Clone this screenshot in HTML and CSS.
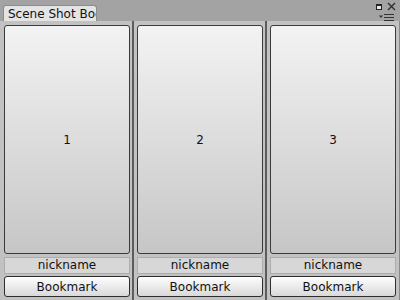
FILE: index.html
```html
<!DOCTYPE html>
<html lang="en">

<head>
    <meta charset="UTF-8">
    <title>Scene Shot Bookmark</title>
    <link rel="stylesheet" href="styles.css">
</head>

<body>

    <!-- Barra da aba -->
    <div class="tabbar">
        <div class="tab">Scene Shot Bookmark</div>
        <div class="win-buttons">
            <div class="win-top">
                <span class="maximize"></span>
                <svg class="close" width="9" height="9" viewBox="0 0 9 9">
                    <path d="M1 1 L8 8 M8 1 L1 8" stroke="#2a2a2a" stroke-width="1.3" fill="none"/>
                </svg>
            </div>
            <svg class="menu" width="16" height="7" viewBox="0 0 16 7">
                <path d="M0 1.5 L4 1.5 L2 4 Z" fill="#333"/>
                <rect x="5" y="0" width="10" height="1" fill="#333"/>
                <rect x="5" y="3" width="10" height="1" fill="#333"/>
                <rect x="5" y="6" width="10" height="1" fill="#333"/>
            </svg>
        </div>
    </div>

    <!-- Colunas de bookmarks -->
    <div class="content">
        <div class="slot">
            <div class="shot">1</div>
            <div class="nickname">nickname</div>
            <button class="bookmark">Bookmark</button>
        </div>
        <div class="divider"></div>
        <div class="slot">
            <div class="shot">2</div>
            <div class="nickname">nickname</div>
            <button class="bookmark">Bookmark</button>
        </div>
        <div class="divider"></div>
        <div class="slot last">
            <div class="shot">3</div>
            <div class="nickname">nickname</div>
            <button class="bookmark">Bookmark</button>
        </div>
    </div>

</body>

</html>
```

FILE: styles.css
```css
body {
    margin: 0;
    width: 400px;
    height: 300px;
    overflow: hidden;
    font-family: "DejaVu Sans", sans-serif;
    font-size: 12px;
    color: #111;
    background: #c2c2c2;
}

.tabbar {
    height: 21px;
    background: #a3a3a3;
    display: flex;
    align-items: flex-end;
    justify-content: space-between;
    padding-left: 3px;
    box-sizing: border-box;
}

.tab {
    width: 94px;
    height: 16px;
    box-sizing: border-box;
    background: #e4e4e4;
    border: 1px solid #8c8c8c;
    border-bottom: none;
    border-radius: 3px 3px 0 0;
    padding: 1px 0 0 4px;
    white-space: nowrap;
    overflow: hidden;
    line-height: 15px;
    color: #111;
}

.win-buttons {
    align-self: stretch;
    display: flex;
    flex-direction: column;
    align-items: flex-end;
    padding: 2px 4px 0 0;
}

.win-top {
    display: flex;
    align-items: center;
    gap: 5px;
}

.maximize {
    width: 4px;
    height: 3px;
    border: 1px solid #222;
    border-top-width: 2px;
    background: #e8e8e8;
}

.menu {
    margin-top: 3px;
    margin-right: 1px;
}

.content {
    display: flex;
    height: 279px;
    border-right: 1px solid #8a8a8a;
}

.slot {
    width: 126px;
    padding: 4px 2px 0 3px;
    display: flex;
    flex-direction: column;
}

.slot:first-child {
    padding-left: 4px;
}

.slot.last {
    padding-right: 3px;
}

.divider {
    width: 2px;
    background: #5c5c5c;
}

.shot {
    height: 229px;
    box-sizing: border-box;
    border: 1px solid #3a3a3a;
    border-radius: 3px;
    background: linear-gradient(to bottom, #f3f3f3, #c6c6c6);
    display: flex;
    align-items: center;
    justify-content: center;
}

.nickname {
    margin-top: 3px;
    height: 17px;
    box-sizing: border-box;
    background: #d7d7d7;
    border: 1px solid #adadad;
    text-align: center;
    line-height: 15px;
}

.bookmark {
    margin-top: 2px;
    height: 21px;
    font-family: "DejaVu Sans", sans-serif;
    font-size: 12px;
    color: #111;
    border: 1px solid #2e2e2e;
    border-radius: 3px;
    background: linear-gradient(to bottom, #fdfdfd, #d9d9d9);
    padding: 0;
}
```
